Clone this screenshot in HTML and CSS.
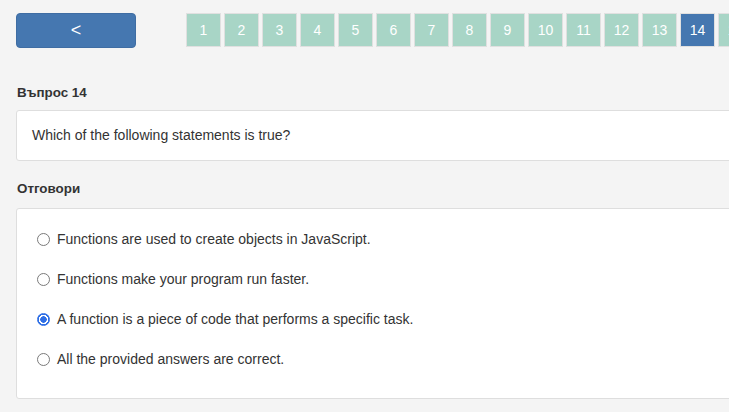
FILE: index.html
```html
<!DOCTYPE html>
<html lang="bg">
<head>
<meta charset="utf-8">
<title>Въпрос 14</title>
<link rel="stylesheet" href="styles.css">
</head>
<body>
<div class="page">
  <div class="topbar">
    <button class="back">&lt;</button>
    <div class="pages">
      <span class="pg">1</span>
      <span class="pg">2</span>
      <span class="pg">3</span>
      <span class="pg">4</span>
      <span class="pg">5</span>
      <span class="pg">6</span>
      <span class="pg">7</span>
      <span class="pg">8</span>
      <span class="pg">9</span>
      <span class="pg">10</span>
      <span class="pg">11</span>
      <span class="pg">12</span>
      <span class="pg">13</span>
      <span class="pg active">14</span>
      <span class="pg">15</span>
      <span class="pg">16</span>
    </div>
  </div>

  <h2 class="label q-label">Въпрос 14</h2>
  <div class="card question">Which of the following statements is true?</div>

  <h2 class="label a-label">Отговори</h2>
  <div class="card answers">
    <div class="opt"><span class="radio"></span><span>Functions are used to create objects in JavaScript.</span></div>
    <div class="opt"><span class="radio"></span><span>Functions make your program run faster.</span></div>
    <div class="opt"><span class="radio checked"></span><span>A function is a piece of code that performs a specific task.</span></div>
    <div class="opt"><span class="radio"></span><span>All the provided answers are correct.</span></div>
  </div>
</div>
</body>
</html>
```
FILE: styles.css
```css
html, body {
  margin: 0;
  padding: 0;
  background: #f4f4f4;
  overflow: hidden;
}
body {
  font-family: "Liberation Sans", Arial, Helvetica, sans-serif;
  color: #333;
  font-size: 14px;
}
.page {
  width: 1000px;
  padding: 13px 0 0 16px;
  box-sizing: border-box;
}
.topbar {
  display: flex;
  align-items: flex-start;
}
.back {
  width: 120px;
  height: 35px;
  background: #4577b0;
  border: 1px solid #3f6da3;
  border-radius: 4px;
  color: #fff;
  font-family: "Liberation Sans", Arial, sans-serif;
  font-size: 18px;
  padding: 0;
  margin: 0;
}
.pages {
  display: flex;
  gap: 3px;
  margin-left: 50px;
}
.pg {
  box-sizing: border-box;
  width: 35px;
  height: 34px;
  background: #a8d5c6;
  border: 1px solid #e0e0e0;
  color: #fff;
  font-size: 14px;
  display: flex;
  align-items: center;
  justify-content: center;
}
.pg.active {
  background: #4577b0;
}
.label {
  margin: 0;
  font-size: 13.4px;
  font-weight: bold;
  line-height: 16px;
  padding-left: 1px;
}
.q-label {
  margin-top: 37px;
  margin-bottom: 9px;
}
.a-label {
  margin-top: 20px;
  margin-bottom: 11px;
}
.card {
  background: #fff;
  border: 1px solid #dedede;
  border-radius: 3px;
}
.question {
  padding: 16px 15px;
  line-height: 17px;
}
.answers {
  box-sizing: content-box;
  height: 160px;
  padding: 10px 0 19px 20px;
}
.opt {
  height: 40px;
  display: flex;
  align-items: center;
  gap: 7px;
}
.radio {
  box-sizing: border-box;
  width: 13px;
  height: 13px;
  border-radius: 50%;
  border: 1px solid #7a7a7a;
  background: #fff;
  flex: none;
}
.radio.checked {
  border: 1px solid #2f6fe6;
  background: radial-gradient(circle, #2f6fe6 0 3px, #fff 3.5px 4.5px, #2f6fe6 5px);
}
```
